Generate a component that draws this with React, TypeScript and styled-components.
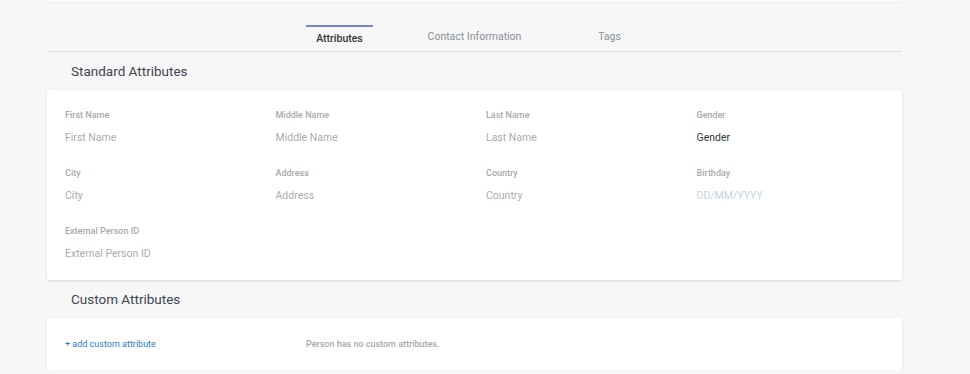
import React from "react";
import styled, { createGlobalStyle } from "styled-components";

const Global = createGlobalStyle`
  html, body { margin: 0; padding: 0; background: #f7f7f7; }
  body { font-family: Roboto, "Liberation Sans", Arial, sans-serif; -webkit-font-smoothing: antialiased; }
`;

const Page = styled.div`
  width: 855px;
  margin-left: 47px;
  display: flex;
  flex-direction: column;
`;

const TopCard = styled.div`
  height: 2px;
  background: #f8f8f8;
  box-shadow: 0 1px 2px rgba(0, 0, 0, 0.06);
`;

const TabBar = styled.nav`
  height: 49px;
  border-bottom: 1px solid #dedede;
  display: flex;
  justify-content: center;
  align-items: flex-start;
`;

const Tab = styled.div`
  width: 135px;
  display: flex;
  justify-content: center;
`;

const TabLabel = styled.span<{ $active?: boolean }>`
  margin-top: 23px;
  padding: ${(p) => (p.$active ? "5px 10px 0" : "3px 10px 0")};
  border-top: 2px solid ${(p) => (p.$active ? "#7986cb" : "transparent")};
  font-size: 10.5px;
  line-height: 13px;
  font-weight: ${(p) => (p.$active ? 500 : 400)};
  color: ${(p) => (p.$active ? "#333" : "#8a8f99")};
  white-space: nowrap;
`;

const SectionTitle = styled.h2`
  margin: 0;
  height: 38px;
  padding-left: 24px;
  display: flex;
  align-items: center;
  font-size: 13.5px;
  font-weight: 400;
  color: #3d4550;
`;

const Card = styled.section`
  background: #fff;
  border-radius: 2px;
  box-shadow: 0 1px 3px rgba(0, 0, 0, 0.13);
`;

const FieldGrid = styled.div`
  display: grid;
  grid-template-columns: repeat(4, 210.5px);
  row-gap: 23px;
  padding: 19px 0 20px 18px;
`;

const Field = styled.div`
  display: flex;
  flex-direction: column;
`;

const Label = styled.label`
  font-size: 9px;
  line-height: 12px;
  font-weight: 500;
  color: #a9a9a9;
`;

const Value = styled.div<{ $tone?: "muted" | "dark" | "hint" }>`
  margin-top: 10px;
  font-size: 10.5px;
  line-height: 13px;
  color: ${(p) => (p.$tone === "dark" ? "#2f3640" : p.$tone === "hint" ? "#c6d2dc" : "#ababab")};
`;

const CustomRow = styled.div`
  height: 52px;
  display: flex;
  align-items: center;
  padding-left: 18px;
  font-size: 9px;
`;

const AddLink = styled.a`
  width: 241px;
  color: #2d7bc4;
  text-decoration: none;
  cursor: pointer;
`;

const Empty = styled.span`
  font-weight: 500;
  color: #a9a9a9;
`;

const fields: { label: string; value: string; tone?: "muted" | "dark" | "hint" }[] = [
  { label: "First Name", value: "First Name" },
  { label: "Middle Name", value: "Middle Name" },
  { label: "Last Name", value: "Last Name" },
  { label: "Gender", value: "Gender", tone: "dark" },
  { label: "City", value: "City" },
  { label: "Address", value: "Address" },
  { label: "Country", value: "Country" },
  { label: "Birthday", value: "DD/MM/YYYY", tone: "hint" },
  { label: "External Person ID", value: "External Person ID" },
];

export default function App() {
  return (
    <>
      <Global />
      <Page>
        <TopCard />
        <TabBar>
          <Tab><TabLabel $active>Attributes</TabLabel></Tab>
          <Tab><TabLabel>Contact Information</TabLabel></Tab>
          <Tab><TabLabel>Tags</TabLabel></Tab>
        </TabBar>
        <SectionTitle>Standard Attributes</SectionTitle>
        <Card>
          <FieldGrid>
            {fields.map((f) => (
              <Field key={f.label}>
                <Label>{f.label}</Label>
                <Value $tone={f.tone}>{f.value}</Value>
              </Field>
            ))}
          </FieldGrid>
        </Card>
        <SectionTitle>Custom Attributes</SectionTitle>
        <Card>
          <CustomRow>
            <AddLink>+ add custom attribute</AddLink>
            <Empty>Person has no custom attributes.</Empty>
          </CustomRow>
        </Card>
      </Page>
    </>
  );
}
